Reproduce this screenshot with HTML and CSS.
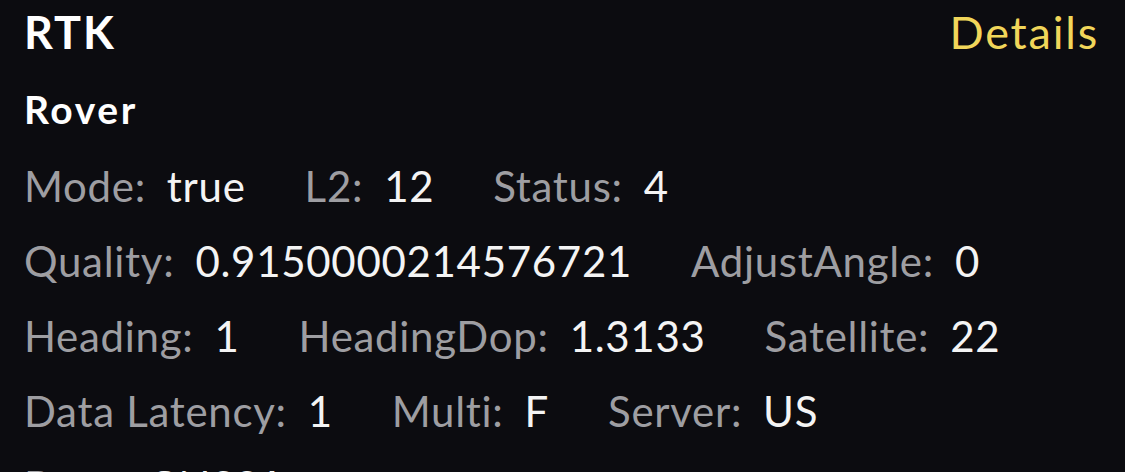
FILE: index.html
```html
<!DOCTYPE html>
<html>
<head>
<meta charset="utf-8">
<link rel="stylesheet" href="styles.css">
</head>
<body>
<div class="panel">
  <div class="header">
    <div class="title">RTK</div>
    <div class="details">Details</div>
  </div>
  <div class="section">Rover</div>
  <div class="row">
    <div class="item"><span class="label">Mode:</span><span class="value">true</span></div>
    <div class="item"><span class="label">L2:</span><span class="value">12</span></div>
    <div class="item"><span class="label">Status:</span><span class="value">4</span></div>
  </div>
  <div class="row">
    <div class="item"><span class="label">Quality:</span><span class="value">0.9150000214576721</span></div>
    <div class="item"><span class="label">AdjustAngle:</span><span class="value">0</span></div>
  </div>
  <div class="row">
    <div class="item"><span class="label">Heading:</span><span class="value">1</span></div>
    <div class="item"><span class="label">HeadingDop:</span><span class="value">1.3133</span></div>
    <div class="item"><span class="label">Satellite:</span><span class="value">22</span></div>
  </div>
  <div class="row">
    <div class="item"><span class="label">Data Latency:</span><span class="value">1</span></div>
    <div class="item"><span class="label">Multi:</span><span class="value">F</span></div>
    <div class="item"><span class="label">Server:</span><span class="value">US</span></div>
  </div>
  <div class="row">
    <div class="item"><span class="label">Base:</span><span class="value">GNSSA</span></div>
  </div>
</div>
</body>
</html>
```
FILE: styles.css
```css
html, body {
  margin: 0;
  padding: 0;
  background: #0c0c10;
  height: 100%;
  overflow: hidden;
}
.panel {
  font-family: Lato, "Noto Sans", sans-serif;
  padding: 0 26px 0 24px;
  color: #f4f4f4;
}
.header {
  display: flex;
  justify-content: space-between;
  align-items: baseline;
  height: 67px;
  line-height: 64px;
}
.title {
  font-size: 45px;
  font-weight: 700;
  letter-spacing: 2px;
  color: #ffffff;
}
.details {
  font-size: 45px;
  letter-spacing: 1.8px;
  color: #f1d65a;
}
.section {
  font-size: 39px;
  font-weight: 700;
  letter-spacing: 2.6px;
  color: #ffffff;
  line-height: 80px;
  margin-top: 2px;
}
.row {
  display: flex;
  gap: 59px;
  font-size: 42px;
  letter-spacing: 0.7px;
  line-height: 75px;
}
.item {
  display: flex;
  gap: 21px;
}
.label {
  color: #9e9ea2;
}
.value {
  color: #f4f4f4;
}
```
